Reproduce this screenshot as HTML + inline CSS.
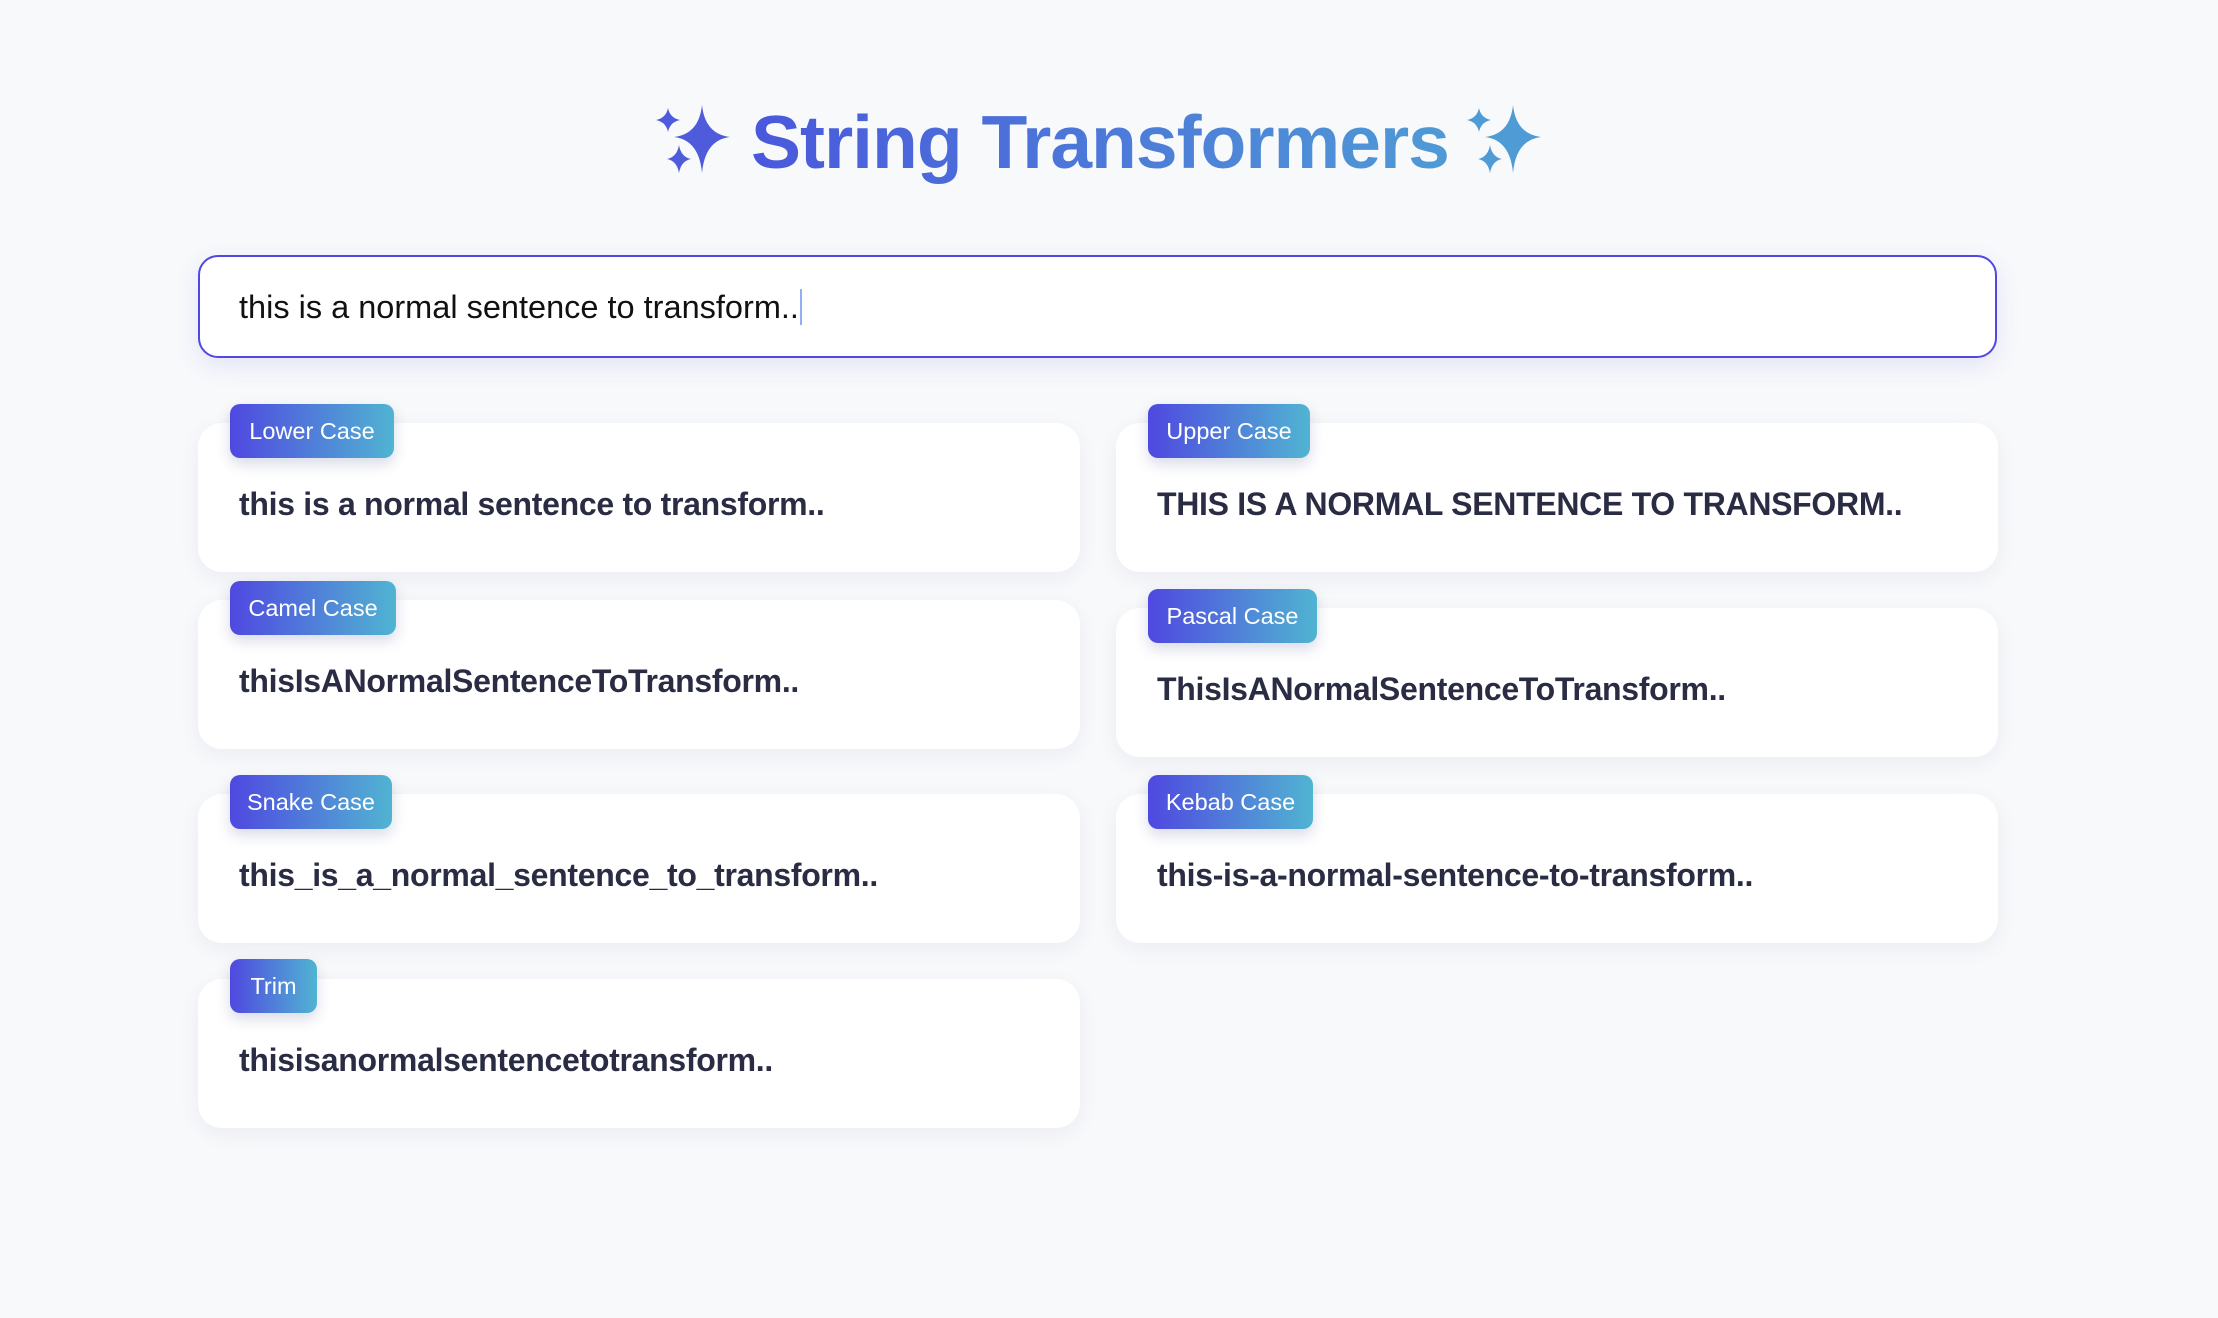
<!DOCTYPE html>
<html><head><meta charset="utf-8"><style>
html,body{margin:0;padding:0}
body{width:2218px;height:1318px;background:#f8f9fb;position:relative;overflow:hidden;font-family:"Liberation Sans",Arial,sans-serif}
.title{position:absolute;left:751px;width:700px;top:94px;text-align:left;font-weight:700;font-size:75px;line-height:96px;letter-spacing:-1px;white-space:nowrap}
.title span{background:linear-gradient(90deg,#4a58dc,#4f9ad6);-webkit-background-clip:text;background-clip:text;color:transparent}
.inp{position:absolute;left:198px;top:255px;width:1795px;height:99px;border:2px solid #5048e0;border-radius:20px;background:#fff;box-shadow:0 8px 24px rgba(80,72,224,.12)}
.inp .t{position:absolute;left:39px;top:32px;font-size:32.5px;color:#111;line-height:36px}
.inp .c{display:inline-block;width:2px;height:36px;background:#8fb1f0;vertical-align:top;margin-left:1px}
.card{position:absolute;width:882px;height:149px;background:#fff;border-radius:24px;box-shadow:0 6px 22px rgba(30,40,80,.06)}
.card .v{position:absolute;left:41px;top:63px;font-size:32px;font-weight:700;color:#2a2c44;letter-spacing:-0.3px;white-space:nowrap}
.badge{position:absolute;height:54px;border-radius:10px;background:linear-gradient(90deg,#4f48e0,#50b4d2);color:#fff;font-size:23.5px;line-height:54px;text-align:center;box-shadow:0 6px 14px rgba(40,50,120,.18);white-space:nowrap}
</style></head><body>
<svg style="position:absolute;left:0;top:0" width="2218" height="300">
<defs><g id="sp">
<path d="M702 105 Q705 134 730 137 Q705 140 702 173 Q699 140 674 137 Q699 134 702 105Z"/>
<path d="M668 108 Q670 118 680 120 Q670 122 668 132 Q666 122 656 120 Q666 118 668 108Z"/>
<path d="M679 145 Q681 157 691 159 Q681 161 679 173 Q677 161 667 159 Q677 157 679 145Z"/>
</g></defs>
<use href="#sp" fill="#4e5cdc"/>
<use href="#sp" fill="#4f9bd6" transform="translate(811,0)"/>
</svg>
<div class="title"><span>String Transformers</span></div>
<div class="inp"><div class="t">this is a normal sentence to transform..<span class="c"></span></div></div>

<div class="card" style="left:198px;top:423px"><div class="v">this is a normal sentence to transform..</div></div>
<div class="badge" style="left:230px;top:404px;width:164px">Lower Case</div>

<div class="card" style="left:1116px;top:423px"><div class="v">THIS IS A NORMAL SENTENCE TO TRANSFORM..</div></div>
<div class="badge" style="left:1148px;top:404px;width:162px">Upper Case</div>

<div class="card" style="left:198px;top:600px"><div class="v">thisIsANormalSentenceToTransform..</div></div>
<div class="badge" style="left:230px;top:581px;width:166px">Camel Case</div>

<div class="card" style="left:1116px;top:608px"><div class="v">ThisIsANormalSentenceToTransform..</div></div>
<div class="badge" style="left:1148px;top:589px;width:169px">Pascal Case</div>

<div class="card" style="left:198px;top:794px"><div class="v">this_is_a_normal_sentence_to_transform..</div></div>
<div class="badge" style="left:230px;top:775px;width:162px">Snake Case</div>

<div class="card" style="left:1116px;top:794px"><div class="v">this-is-a-normal-sentence-to-transform..</div></div>
<div class="badge" style="left:1148px;top:775px;width:165px">Kebab Case</div>

<div class="card" style="left:198px;top:979px"><div class="v">thisisanormalsentencetotransform..</div></div>
<div class="badge" style="left:230px;top:959px;width:87px">Trim</div>
</body></html>
